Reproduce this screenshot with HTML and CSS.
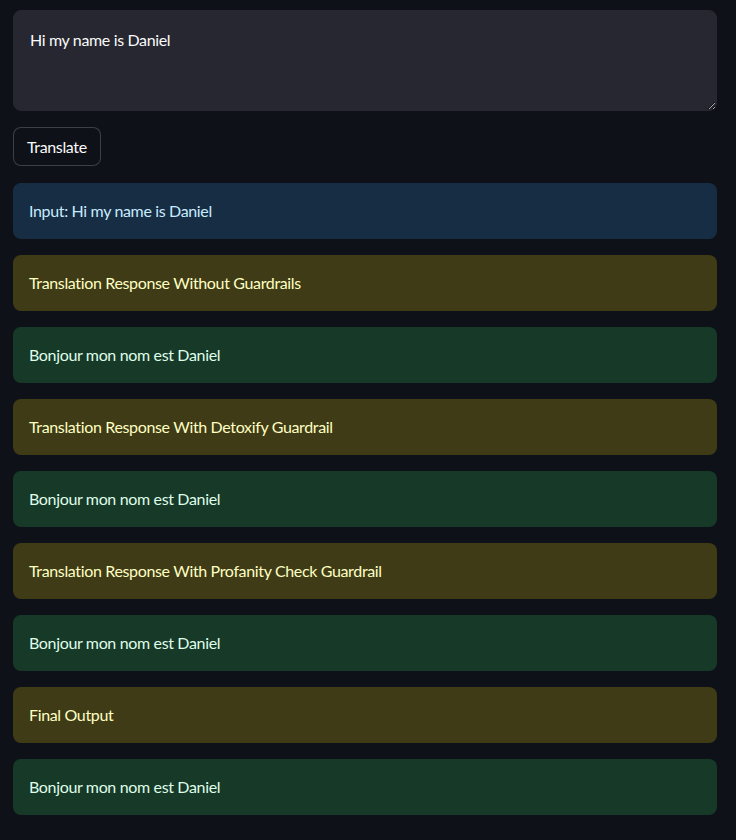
FILE: index.html
```html
<!DOCTYPE html>
<html>
<head>
<meta charset="utf-8">
<link rel="stylesheet" href="styles.css">
</head>
<body>
<main class="app">
  <textarea class="input">Hi my name is Daniel</textarea>
  <div class="btn-row"><button class="btn">Translate</button></div>
  <div class="alert info">Input: Hi my name is Daniel</div>
  <div class="alert warn">Translation Response Without Guardrails</div>
  <div class="alert ok">Bonjour mon nom est Daniel</div>
  <div class="alert warn">Translation Response With Detoxify Guardrail</div>
  <div class="alert ok">Bonjour mon nom est Daniel</div>
  <div class="alert warn">Translation Response With Profanity Check Guardrail</div>
  <div class="alert ok">Bonjour mon nom est Daniel</div>
  <div class="alert warn">Final Output</div>
  <div class="alert ok">Bonjour mon nom est Daniel</div>
</main>
</body>
</html>
```
FILE: styles.css
```css
html, body {
  margin: 0;
  background: #0e1117;
  font-family: "Lato", "Noto Sans", sans-serif;
  font-size: 16px;
  letter-spacing: -0.35px;
  color: #fafafa;
}
.app {
  padding: 10px 19px 0 13px;
  display: flex;
  flex-direction: column;
}
.input {
  display: block;
  box-sizing: border-box;
  width: 100%;
  height: 101px;
  background: #262730;
  color: #fafafa;
  border: 1px solid #262730;
  border-radius: 8px;
  padding: 16px;
  font-family: inherit;
  font-size: 16px;
  letter-spacing: -0.35px;
  line-height: 1.6;
  resize: vertical;
  outline: none;
}
.btn-row {
  margin-top: 16px;
  margin-bottom: 17px;
  display: flex;
}
.btn {
  box-sizing: border-box;
  height: 39px;
  padding: 0 13px 0 13px;
  background: #0e1117;
  color: #fafafa;
  border: 1px solid rgba(250, 250, 250, 0.2);
  border-radius: 8px;
  font-family: inherit;
  font-size: 16px;
  letter-spacing: -0.35px;
}
.alert {
  border-radius: 8px;
  padding: 16px;
  line-height: 24px;
  margin-bottom: 16px;
}
.info { background: #172d43; color: #c7ebff; }
.warn { background: #3e3b16; color: #ffffc2; }
.ok { background: #173928; color: #dffde9; }
```
